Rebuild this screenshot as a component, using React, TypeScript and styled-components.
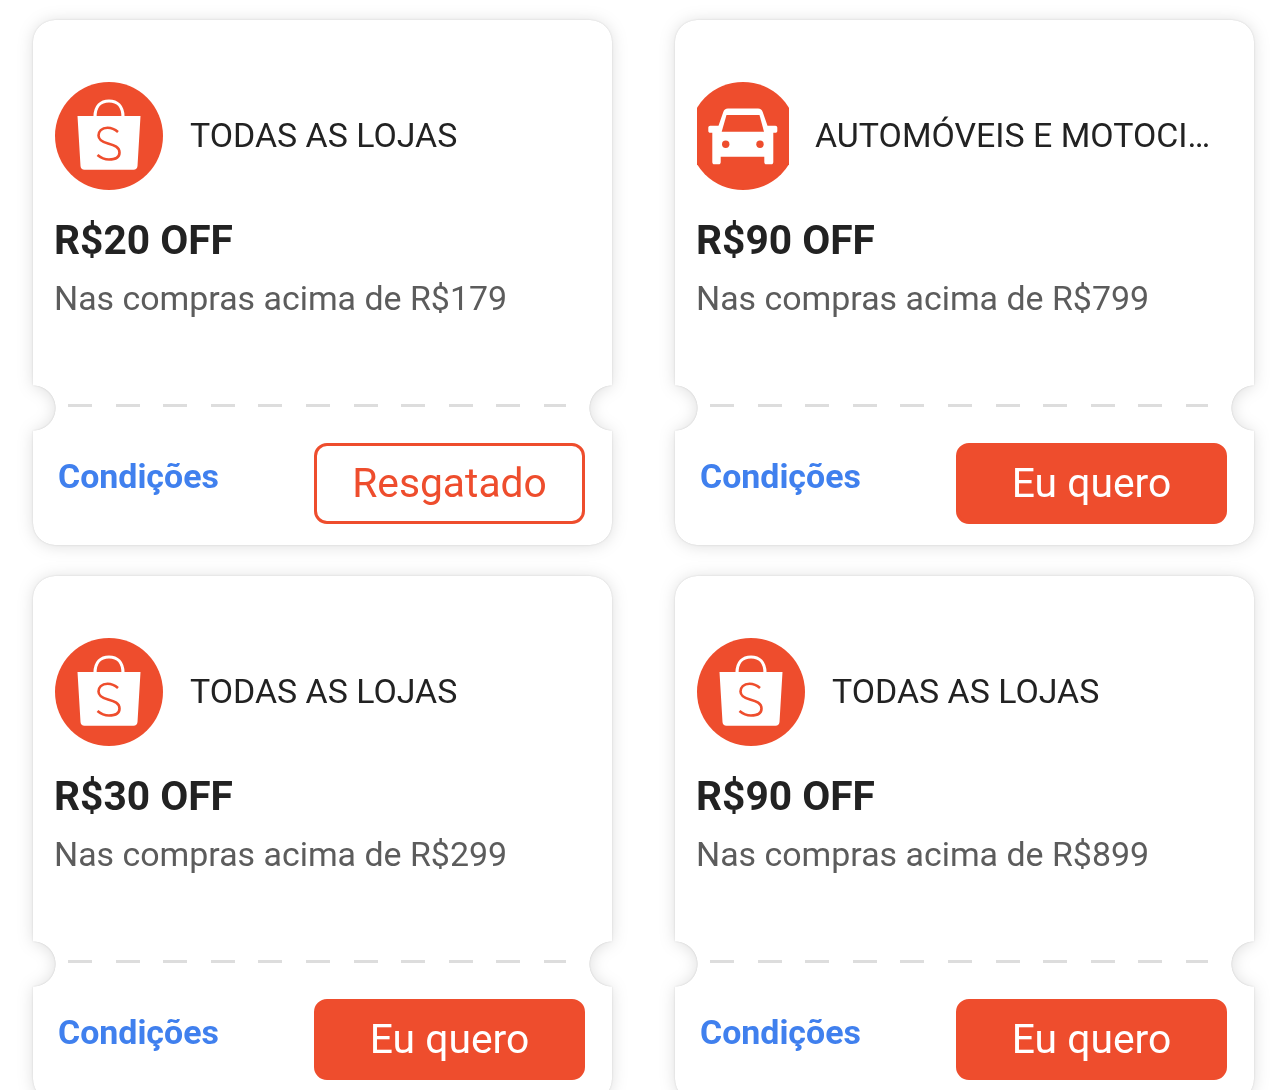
import styled, { createGlobalStyle } from "styled-components";

const GlobalStyle = createGlobalStyle`
    html, body {
        margin: 0;
        height: 1090px;
        overflow: hidden;
        background: #fff;
        font-family: Roboto, "Liberation Sans", sans-serif;
    }
`;

const Grid = styled.div`
    display: grid;
    grid-template-columns: 579px 579px;
    column-gap: 63px;
    row-gap: 31px;
    padding: 20px 0 0 33px;
`;

const Shadow = styled.div`
    filter: drop-shadow(0 0 1px rgba(0, 0, 0, 0.12)) drop-shadow(0 1px 8px rgba(0, 0, 0, 0.13));
`;

const Ticket = styled.div`
    height: 525px;
    background: #fff;
    border-radius: 22px;
    -webkit-mask-image: radial-gradient(circle 23px at 0 388px, transparent 97%, #000 100%),
        radial-gradient(circle 23px at 100% 388px, transparent 97%, #000 100%);
    mask-image: radial-gradient(circle 23px at 0 388px, transparent 97%, #000 100%),
        radial-gradient(circle 23px at 100% 388px, transparent 97%, #000 100%);
    -webkit-mask-composite: source-in;
    mask-composite: intersect;
`;

const Body = styled.div`
    box-sizing: border-box;
    height: 384px;
    padding: 62px 22px 0;
`;

const Header = styled.div`
    display: flex;
    align-items: center;
    height: 108px;
`;

const IconBox = styled.div<{ $narrow?: boolean }>`
    flex: none;
    width: ${(p) => (p.$narrow ? "92px" : "108px")};
    height: 108px;
    margin-right: ${(p) => (p.$narrow ? "26px" : "27px")};
    overflow: hidden;
    display: flex;
    justify-content: center;
    svg {
        flex: none;
    }
`;

const Shop = styled.div`
    flex: 1;
    min-width: 0;
    padding: 0 19px 0 0;
    margin-top: -1px;
    font-size: 33.9px;
    line-height: 41px;
    color: #222;
    white-space: nowrap;
    overflow: hidden;
    text-overflow: ellipsis;
`;

const Price = styled.div`
    margin: 25px 0 0 -1px;
    font-size: 40.7px;
    line-height: 50px;
    font-weight: 700;
    color: #222;
`;

const Rule = styled.div`
    margin: 10px 0 0 -1px;
    font-size: 33.9px;
    line-height: 48px;
    color: #5c5c5c;
`;

const Divider = styled.div`
    height: 3px;
    margin: 0 46px 0 35px;
    background: repeating-linear-gradient(to right, #ddd 0 24px, transparent 24px 47.6px);
`;

const Footer = styled.div`
    display: flex;
    align-items: center;
    justify-content: space-between;
    padding: 36px 27px 21px 25px;
`;

const Terms = styled.a`
    margin-bottom: 14px;
    font-size: 33.9px;
    line-height: 40px;
    font-weight: 700;
    color: #4080ee;
`;

const ActionButton = styled.button<{ $done?: boolean }>`
    box-sizing: border-box;
    width: 271px;
    height: 81px;
    padding: 0 0 2px;
    border: 3px solid #ee4d2d;
    border-radius: 13px;
    background: ${(p) => (p.$done ? "#fff" : "#ee4d2d")};
    color: ${(p) => (p.$done ? "#ee4d2d" : "#fff")};
    font-family: inherit;
    font-size: 40.8px;
`;

function ShopeeIcon() {
    return (
        <svg width="108" height="108" viewBox="0 0 108 108">
            <circle cx="54" cy="54" r="54" fill="#ee4d2d" />
            <path d="M40 35c0-11 6-16 14-16s14 5 14 16" fill="none" stroke="#fff" strokeWidth="3.2" />
            <path
                d="M22.500 34h63l-3 50c-.1 2.300-1.700 3.700-4 3.700H29.500c-2.300 0-3.900-1.400-4-3.700z"
                fill="#fff"
            />
            <path
                d="M63 50c-4-3.500-8-4.200-10.500-4.200-6 0-9 3.700-9 7.700 0 4.500 4 6.500 9.500 8 6.500 1.800 11.500 3.500 11.500 9 0 5-4.500 7-10.500 7-4 0-8-1.500-11.500-4.500"
                fill="none"
                stroke="#ee4d2d"
                strokeWidth="2.600"
            />
        </svg>
    );
}

function CarIcon() {
    return (
        <svg width="108" height="108" viewBox="0 0 108 108">
            <circle cx="54" cy="54" r="54" fill="#ee4d2d" />
            <path
                d="M39 26.500h30c2.500 0 4 1.200 4.700 3.500l4.800 13.700h7.800c1.200 0 2 .9 2 1.900v3.300c0 1-.8 1.800-2 1.800h-2V80c0 1.400-.8 2.300-2 2.300h-5c-1.200 0-2-.9-2-2.300v-5.300H31.700V80c0 1.400-.8 2.300-2 2.300h-4.400c-1.200 0-2-.9-2-2.300V50.700h-2c-1.200 0-2-.8-2-1.800v-3.300c0-1 .8-1.900 2-1.900h8.200L34.300 30c.7-2.300 2.200-3.500 4.700-3.500z"
                fill="#fff"
            />
            <path d="M37.500 33h33l4.500 16.700H32.700z" fill="#ee4d2d" />
            <circle cx="36.700" cy="62.300" r="3.700" fill="#ee4d2d" />
            <circle cx="71" cy="62.300" r="3.700" fill="#ee4d2d" />
        </svg>
    );
}

const coupons = [
    { shop: "TODAS AS LOJAS", price: "R$20 OFF", min: "R$179", done: true },
    { shop: "AUTOMÓVEIS E MOTOCICLETAS", price: "R$90 OFF", min: "R$799", car: true },
    { shop: "TODAS AS LOJAS", price: "R$30 OFF", min: "R$299" },
    { shop: "TODAS AS LOJAS", price: "R$90 OFF", min: "R$899" },
];

function App() {
    return (
        <>
            <GlobalStyle />
            <Grid>
                {coupons.map((coupon, i) => (
                    <Shadow key={i}>
                        <Ticket>
                            <Body>
                                <Header>
                                    <IconBox $narrow={coupon.car}>
                                        {coupon.car ? <CarIcon /> : <ShopeeIcon />}
                                    </IconBox>
                                    <Shop>{coupon.shop}</Shop>
                                </Header>
                                <Price>{coupon.price}</Price>
                                <Rule>Nas compras acima de {coupon.min}</Rule>
                            </Body>
                            <Divider />
                            <Footer>
                                <Terms>Condições</Terms>
                                <ActionButton $done={coupon.done}>
                                    {coupon.done ? "Resgatado" : "Eu quero"}
                                </ActionButton>
                            </Footer>
                        </Ticket>
                    </Shadow>
                ))}
            </Grid>
        </>
    );
}

export default App;
